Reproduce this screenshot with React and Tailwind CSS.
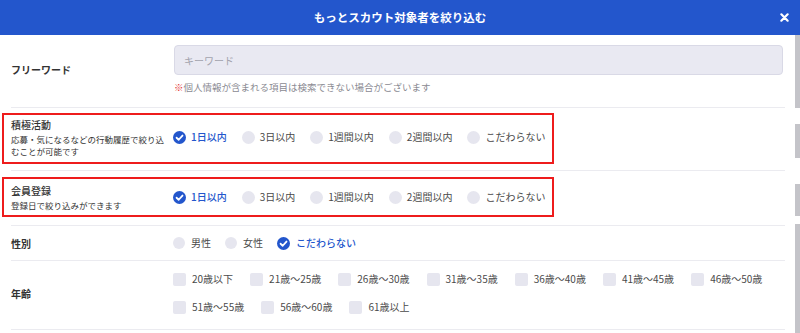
import React from "react";

const PERIODS = ["1日以内", "3日以内", "1週間以内", "2週間以内", "こだわらない"];
const GENDERS = ["男性", "女性", "こだわらない"];
const AGES = [
  "20歳以下",
  "21歳〜25歳",
  "26歳〜30歳",
  "31歳〜35歳",
  "36歳〜40歳",
  "41歳〜45歳",
  "46歳〜50歳",
  "51歳〜55歳",
  "56歳〜60歳",
  "61歳以上",
];

function CheckedCircle() {
  return (
    <svg width="13" height="13" viewBox="0 0 16 16" className="shrink-0">
      <circle cx="8" cy="8" r="8" fill="#2356cc" />
      <path
        d="M4.4 8.3 L7 10.8 L11.7 5.6"
        fill="none"
        stroke="#fff"
        strokeWidth="2.2"
        strokeLinecap="round"
        strokeLinejoin="round"
      />
    </svg>
  );
}

function RadioGroup({ options, selected }) {
  return (
    <div className="flex items-center gap-[15px]">
      {options.map((opt) => (
        <div key={opt} className="flex items-center gap-[5px]">
          {opt === selected ? (
            <CheckedCircle />
          ) : (
            <span className="w-[13px] h-[13px] rounded-full bg-[#e6e6ef] shrink-0" />
          )}
          <span
            className={
              opt === selected
                ? "text-[10px] leading-[14px] text-[#2356cc] font-medium"
                : "text-[10px] leading-[14px] text-[#4a4a4a]"
            }
          >
            {opt}
          </span>
        </div>
      ))}
    </div>
  );
}

function HighlightBox({ title, desc, pad }) {
  return (
    <div className={`-ml-[9px] w-[552px] border-2 border-[#ee1c1c] pl-[7px] flex items-center ${pad}`}>
      <div className="w-[162px] shrink-0">
        <div className="text-[10px] leading-[16px] text-[#333] font-medium">{title}</div>
        <div className="text-[8.5px] leading-[12px] text-[#333] max-w-[155px]">{desc}</div>
      </div>
      <RadioGroup options={PERIODS} selected="1日以内" />
    </div>
  );
}

export default function App() {
  return (
    <div
      className="w-[800px] h-[333px] overflow-hidden bg-white flex flex-col"
      style={{ fontFamily: '"Noto Sans CJK JP", "Noto Sans", sans-serif' }}
    >
      {/* HEADER */}
      <div className="h-[35px] shrink-0 bg-[#2356cc] flex items-center justify-center relative">
        <span className="text-white font-bold text-[11.5px]">もっとスカウト対象者を絞り込む</span>
        <svg
          width="9"
          height="9"
          viewBox="0 0 10 10"
          className="absolute right-[11px] top-[13px]"
        >
          <path d="M1.5 1.5 L8.5 8.5 M8.5 1.5 L1.5 8.5" stroke="#fff" strokeWidth="2.4" strokeLinecap="round" />
        </svg>
      </div>

      <div className="flex flex-1 min-h-0">
        {/* BODY */}
        <div className="flex-1 pl-[11px] pr-[10px]">
          {/* Free word */}
          <div className="flex items-center border-b border-[#ebebf0] pt-[10px] pb-[13px]">
            <div className="w-[163px] shrink-0 text-[10px] font-bold text-[#333]">フリーワード</div>
            <div className="flex-1 pr-[2px]">
              <div className="h-[30px] rounded-[4px] border border-[#d9d9e6] bg-[#e9e9f2] flex items-center px-[9px]">
                <span className="text-[10px] text-[#a3a3ad]">キーワード</span>
              </div>
              <div className="mt-[5px] text-[9.5px] leading-[14px] text-[#8a8a92]">
                <span className="text-[#e53935]">※</span>個人情報が含まれる項目は検索できない場合がございます
              </div>
            </div>
          </div>

          {/* Active */}
          <div className="mt-[5px]">
            <HighlightBox
              title="積極活動"
              desc="応募・気になるなどの行動履歴で絞り込むことが可能です"
              pad="pt-[2px] pb-[5px]"
            />
          </div>
          <div className="mt-[6px] border-b border-[#ebebf0]" />

          {/* Register */}
          <div className="mt-[6px]">
            <HighlightBox title="会員登録" desc="登録日で絞り込みができます" pad="pt-[4px] pb-[4px]" />
          </div>
          <div className="mt-[8px] border-b border-[#ebebf0]" />

          {/* Gender */}
          <div className="h-[35px] flex items-center border-b border-[#ebebf0]">
            <div className="w-[162px] shrink-0 text-[10px] font-bold text-[#333]">性別</div>
            <div className="flex items-center gap-[14px]">
              {GENDERS.map((g) => (
                <div key={g} className="flex items-center gap-[6px]">
                  {g === "こだわらない" ? (
                    <CheckedCircle />
                  ) : (
                    <span className="w-[12px] h-[12px] rounded-full bg-[#e6e6ef] shrink-0" />
                  )}
                  <span
                    className={
                      g === "こだわらない"
                        ? "text-[10px] leading-[14px] text-[#2356cc] font-medium"
                        : "text-[10px] leading-[14px] text-[#4a4a4a]"
                    }
                  >
                    {g}
                  </span>
                </div>
              ))}
            </div>
          </div>

          {/* Age */}
          <div className="flex items-center border-b border-[#ebebf0] pt-[4px] pb-[8px]">
            <div className="w-[162px] shrink-0 text-[10px] font-bold text-[#333]">年齢</div>
            <div className="flex flex-1 flex-wrap gap-x-[17px]">
              {AGES.map((a) => (
                <div key={a} className="h-[28px] flex items-center gap-[6px]">
                  <span className="w-[13px] h-[13px] rounded-[2px] bg-[#e6e6ef] shrink-0" />
                  <span className="text-[10px] leading-[14px] text-[#4a4a4a]">{a}</span>
                </div>
              ))}
            </div>
          </div>
        </div>

        {/* scrollbar strip */}
        <div className="w-[5px] shrink-0 flex flex-col">
          <div className="h-[73px] bg-[#c4c4c9]" />
          <div className="h-[16px]" />
          <div className="h-[34px] bg-[#c4c4c9]" />
          <div className="h-[26px]" />
          <div className="h-[32px] bg-[#c4c4c9]" />
          <div className="h-[8px]" />
          <div className="flex-1 bg-[#c4c4c9]" />
        </div>
      </div>
    </div>
  );
}
